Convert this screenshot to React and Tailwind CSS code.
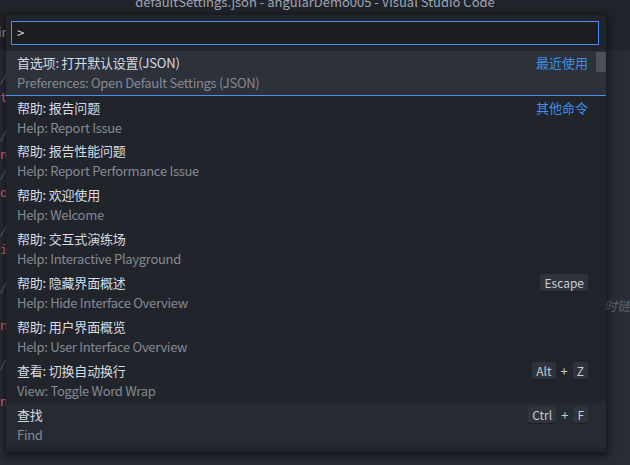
const ITEMS = [
  { label: '首选项: 打开默认设置(JSON)', detail: 'Preferences: Open Default Settings (JSON)', tag: '最近使用', active: true },
  { label: '帮助: 报告问题', detail: 'Help: Report Issue', tag: '其他命令', separator: true },
  { label: '帮助: 报告性能问题', detail: 'Help: Report Performance Issue' },
  { label: '帮助: 欢迎使用', detail: 'Help: Welcome' },
  { label: '帮助: 交互式演练场', detail: 'Help: Interactive Playground' },
  { label: '帮助: 隐藏界面概述', detail: 'Help: Hide Interface Overview', keys: ['Escape'] },
  { label: '帮助: 用户界面概览', detail: 'Help: User Interface Overview' },
  { label: '查看: 切换自动换行', detail: 'View: Toggle Word Wrap', keys: ['Alt', 'Z'] },
  { label: '查找', detail: 'Find', keys: ['Ctrl', 'F'], hover: true },
];

// one entry per 19px editor line, only the first column shows past the panel
const RED = 'text-[#e06c75]';
const GRAY = 'text-[#5c6370] italic';
const EDITOR_LINES = [
  ['', ''], ['/', GRAY], ['t', RED], ['', ''], ['/', GRAY], ['n', RED], ['/', GRAY], ['o', RED],
  ['', ''], ['/', GRAY], ['i', RED], ['', ''], ['/', GRAY], ['', ''], ['n', RED], ['', ''],
  ['/', GRAY], ['', ''], ['n', RED], ['', ''], ['', ''],
];

function Key({ children }) {
  return (
    <span className="inline-flex h-[18px] items-center rounded-[3px] bg-[#2f333b] px-[4px] text-[12px] leading-none text-[#c8ccd4] shadow-[inset_0_-1px_0_#1b1e23]">
      {children}
    </span>
  );
}

function Row({ item }) {
  return (
    <div
      className={
        'relative flex h-[44px] flex-col py-[2px] pl-[11px] pr-[18px] ' +
        (item.active ? 'bg-[#2c313a] ' : item.hover ? 'bg-[#262a31] ' : '') +
        (item.separator ? 'border-t border-[#4d8cf0] ' : '')
      }
    >
      <div className="flex h-[20px] items-center justify-between">
        <span className="text-[13px] tracking-[-0.2px] text-[#d7dae0]">{item.label}</span>
        {item.tag && <span className="text-[13px] text-[#3f8fe8]">{item.tag}</span>}
        {item.keys && (
          <span className="flex items-center gap-[5px] text-[13px] text-[#c8ccd4]">
            {item.keys.map((k, i) => (
              <span key={k} className="flex items-center gap-[5px]">
                {i > 0 && <span>+</span>}
                <Key>{k}</Key>
              </span>
            ))}
          </span>
        )}
      </div>
      <div className="flex h-[20px] items-center">
        <span className="text-[13px] tracking-[-0.3px] text-[#858a94]">{item.detail}</span>
      </div>
      {item.active && <div className="absolute right-0 top-[1px] h-[20px] w-[10px] bg-[#4a4f59]" />}
    </div>
  );
}

export default function App() {
  return (
    <div
      className="relative h-[465px] w-[630px] overflow-hidden bg-[#282c34]"
      style={{ fontFamily: '"Noto Sans CJK SC", "Noto Sans", sans-serif' }}
    >
      {/* title bar, scrolled mostly out of view */}
      <div className="flex h-[16px] items-end justify-center overflow-hidden bg-[#21252b]">
        <span className="mb-[8px] text-[13px] leading-none text-[#9da5b4]">
          defaultSettings.json - angularDemo005 - Visual Studio Code
        </span>
      </div>
      {/* tab bar */}
      <div className="flex h-[34px] items-center bg-[#21252b] pb-[2px]">
        <span className="-ml-[2px] text-[13px] text-[#9da5b4]">ir</span>
      </div>
      {/* editor */}
      <div className="flex w-[10px] flex-col">
        {EDITOR_LINES.map(([ch, cls], i) => (
          <div
            key={i}
            className={'h-[19px] text-[13px] leading-[19px] ' + cls}
            style={{ fontFamily: '"DejaVu Sans Mono", monospace' }}
          >
            {ch}
          </div>
        ))}
      </div>
      <div className="absolute right-0 top-[296px] text-[13px] italic text-[#5c6370]">时链</div>

      {/* quick pick */}
      <div className="absolute left-[6px] top-[15px] w-[600px] bg-[#21252b] pb-[5px] pt-[6px] shadow-[0_2px_8px_2px_rgba(0,0,0,0.55)]">
        <div className="ml-[5px] mr-[7px] flex h-[24px] items-center border border-[#528bff] bg-[#1b1d23] px-[5px]">
          <span className="text-[13px] text-[#d7dae0]">&gt;</span>
        </div>
        <div className="mt-[6px]">
          {ITEMS.map((item) => (
            <Row key={item.label} item={item} />
          ))}
        </div>
      </div>
    </div>
  );
}
